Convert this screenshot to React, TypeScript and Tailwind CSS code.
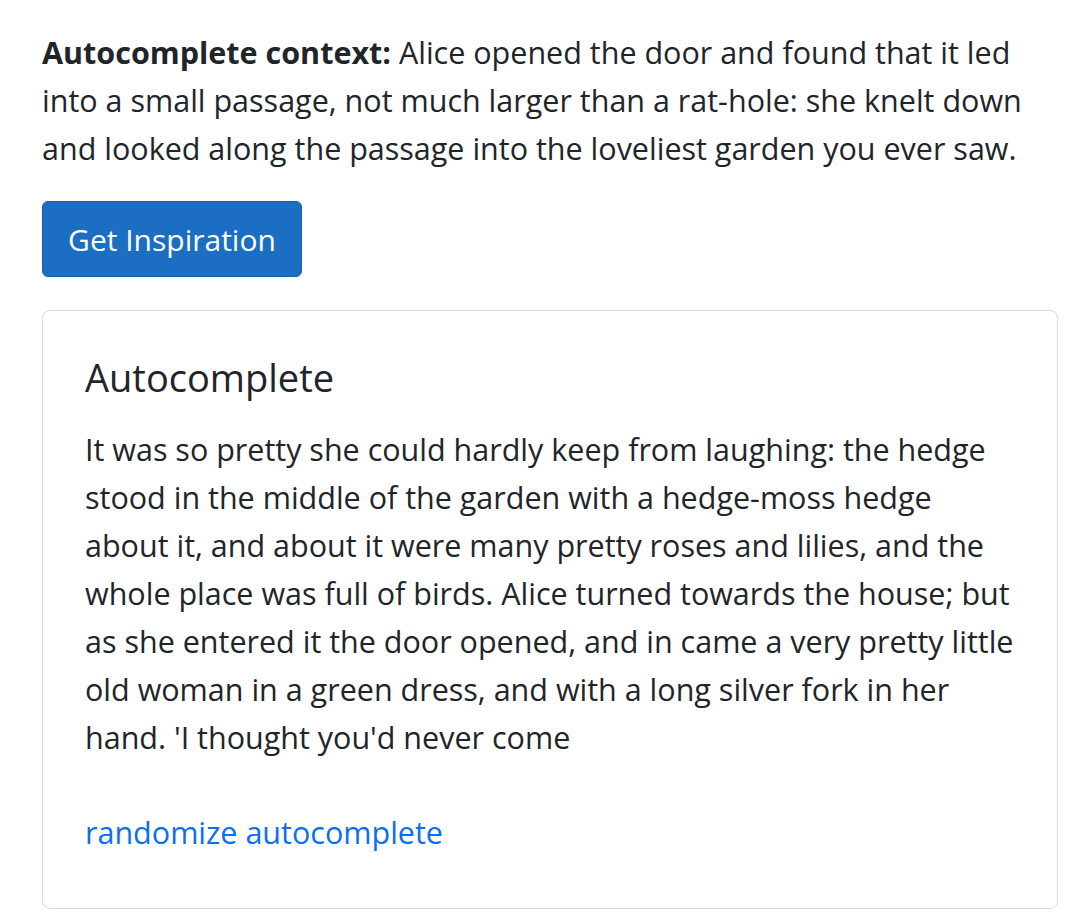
export default function App() {
  return (
    <div className="min-h-screen bg-white font-['Open_Sans',sans-serif] text-[#212529]">
      <div className="w-[1058px] pl-[42px] pt-[28px]">
        <p className="whitespace-nowrap text-[30.5px] leading-[48px]">
          <b className="font-bold">Autocomplete context:</b> Alice opened the door and found that it led
          <br />
          into a small passage, not much larger than a rat-hole: she knelt down
          <br />
          and looked along the passage into the loveliest garden you ever saw.
        </p>

        <button className="mt-[29px] h-[76px] w-[260px] rounded-[6px] border border-[#1861ac] bg-[#1b6ec2] text-[30px] text-white">
          Get Inspiration
        </button>

        <div className="mt-[33px] rounded-[8px] border border-[#dcdcdc] px-[42px] pt-[42px] pb-[52px]">
          <h5 className="text-[38px] leading-[48px] font-normal">Autocomplete</h5>
          <p className="mt-[24px] whitespace-nowrap text-[30.5px] leading-[48px]">
            It was so pretty she could hardly keep from laughing: the hedge
            <br />
            stood in the middle of the garden with a hedge-moss hedge
            <br />
            about it, and about it were many pretty roses and lilies, and the
            <br />
            whole place was full of birds. Alice turned towards the house; but
            <br />
            as she entered it the door opened, and in came a very pretty little
            <br />
            old woman in a green dress, and with a long silver fork in her
            <br />
            hand. 'I thought you'd never come
          </p>
          <a href="#" className="mt-[47px] block text-[30.5px] leading-[48px] text-[#0a6ff5]">
            randomize autocomplete
          </a>
        </div>
      </div>
    </div>
  );
}
